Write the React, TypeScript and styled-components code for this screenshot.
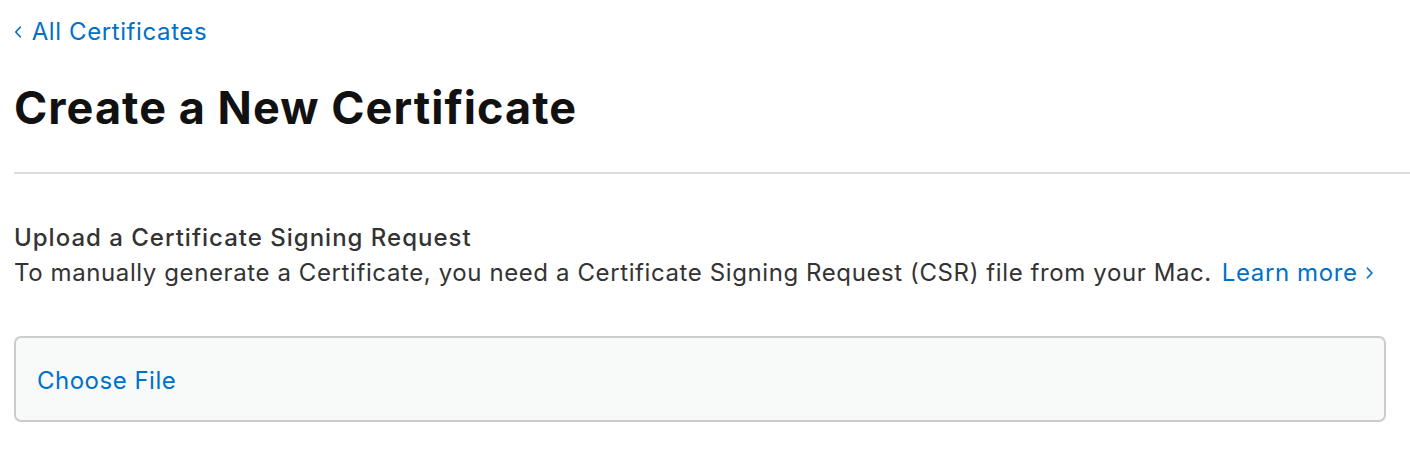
import React from "react";
import styled, { createGlobalStyle } from "styled-components";

const Global = createGlobalStyle`
  html, body { margin: 0; padding: 0; background: #fff; }
  body { font-family: Inter, "Noto Sans", sans-serif; -webkit-font-smoothing: antialiased; }
`;

const Page = styled.div`
  padding: 14px 0 0 14px;
  display: flex;
  flex-direction: column;
`;

const BackLink = styled.a`
  color: #0070c9;
  font-size: 24px;
  line-height: 36px;
  letter-spacing: 0.6px;
  text-decoration: none;
  display: flex;
  align-items: center;
  gap: 10px;
`;

const Title = styled.h1`
  margin: 30px 0 0 0;
  font-size: 45px;
  line-height: 56px;
  font-weight: 700;
  color: #111;
  letter-spacing: 1.05px;
`;

const Rule = styled.hr`
  margin: 36px 0 0 0;
  border: none;
  height: 2px;
  background: #dcdcdc;
`;

const Section = styled.section`
  margin-top: 46px;
  display: flex;
  flex-direction: column;
`;

const SectionTitle = styled.h2`
  margin: 0;
  font-size: 24px;
  font-weight: 500;
  line-height: 35px;
  letter-spacing: 1px;
  color: #333;
`;

const Text = styled.p`
  margin: 0;
  font-size: 24px;
  line-height: 35px;
  letter-spacing: 0.6px;
  color: #333;
  display: flex;
  align-items: center;
`;

const InlineLink = styled.a`
  color: #0070c9;
  text-decoration: none;
  margin-left: 10px;
  display: inline-flex;
  align-items: center;
  gap: 8px;
`;

const FileBox = styled.div`
  margin: 46px 24px 0 0;
  height: 82px;
  border: 2px solid #cccccc;
  border-radius: 7px;
  background: #f8f9f9;
  display: flex;
  align-items: center;
  padding-left: 21px;
`;

const FileButton = styled.span`
  color: #0070c9;
  font-size: 24px;
  letter-spacing: 0.5px;
  padding-top: 2px;
`;

const Chevron = ({ dir, size }: { dir: "left" | "right"; size: number }) => (
  <svg width={size * 0.55} height={size} viewBox="0 0 8 14" fill="none">
    <path
      d={dir === "left" ? "M6.5 2 L1.8 7 L6.5 12" : "M1.5 2 L6.2 7 L1.5 12"}
      stroke="#0070c9"
      strokeWidth="1.7"
      strokeLinecap="round"
      strokeLinejoin="round"
    />
  </svg>
);

export default function App() {
  return (
    <>
      <Global />
      <Page>
        <BackLink href="#">
          <Chevron dir="left" size={14} />
          All Certificates
        </BackLink>
        <Title>Create a New Certificate</Title>
        <Rule />
        <Section>
          <SectionTitle>Upload a Certificate Signing Request</SectionTitle>
          <Text>
            To manually generate a Certificate, you need a Certificate Signing Request (CSR) file from your Mac.
            <InlineLink href="#">
              Learn more
              <Chevron dir="right" size={14} />
            </InlineLink>
          </Text>
        </Section>
        <FileBox>
          <FileButton>Choose File</FileButton>
        </FileBox>
      </Page>
    </>
  );
}
